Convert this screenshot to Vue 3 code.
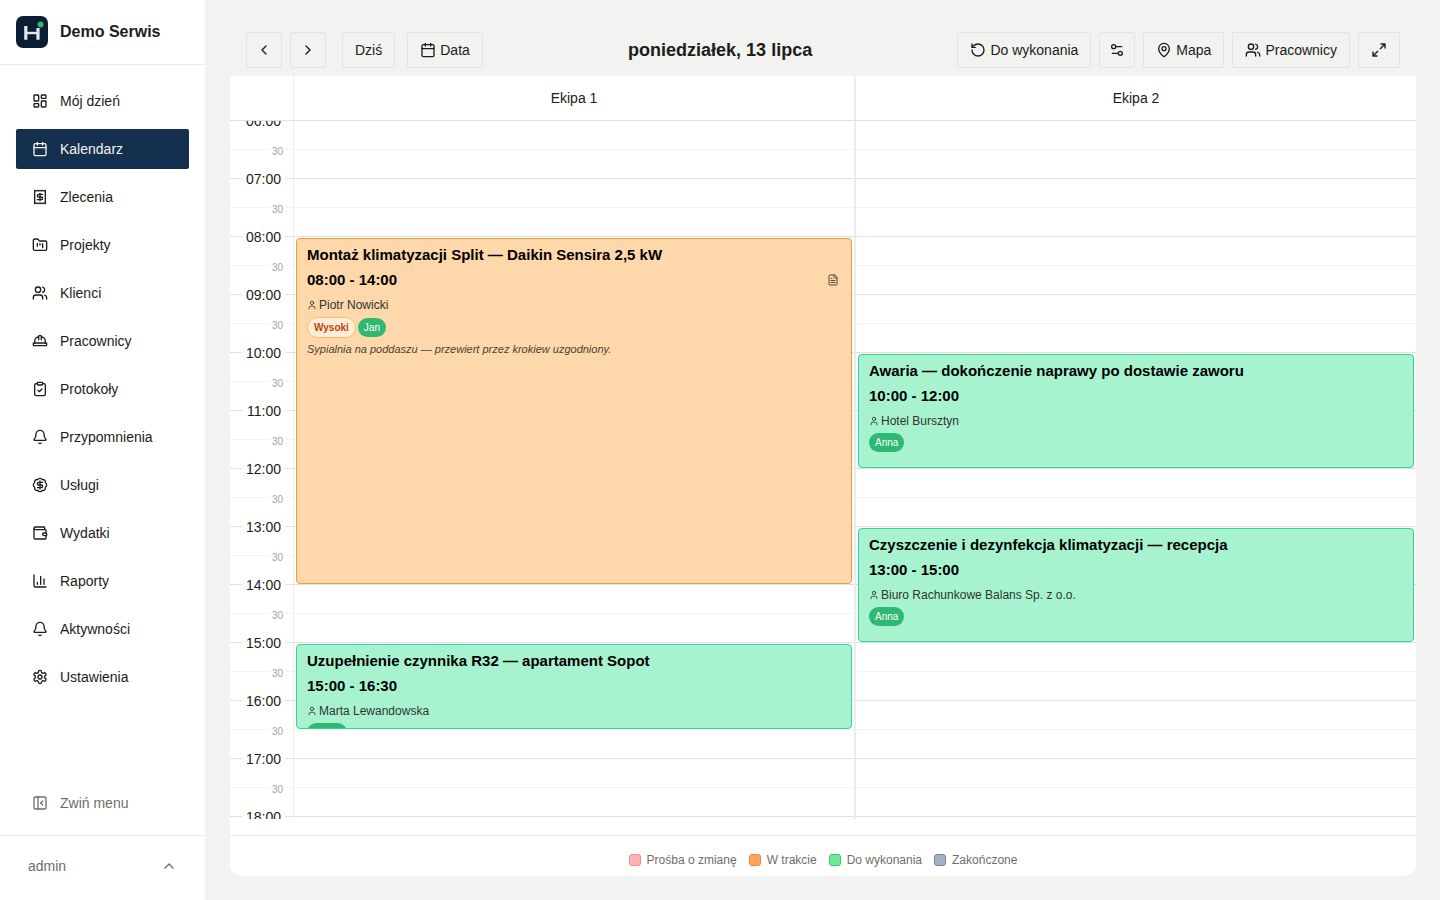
<script setup>
import { h } from 'vue'

const shapes = {
  dashboard: '<rect width="7" height="9" x="3" y="3" rx="1"/><rect width="7" height="5" x="14" y="3" rx="1"/><rect width="7" height="9" x="14" y="12" rx="1"/><rect width="7" height="5" x="3" y="16" rx="1"/>',
  calendar: '<path d="M8 2v4M16 2v4M3 10h18"/><rect width="18" height="18" x="3" y="4" rx="2"/>',
  receipt: '<path d="M4 2v20l2-1 2 1 2-1 2 1 2-1 2 1 2-1 2 1V2l-2 1-2-1-2 1-2-1-2 1-2-1-2 1Z"/><path d="M16 8h-6a2 2 0 1 0 0 4h4a2 2 0 1 1 0 4H8M12 17.5v-11"/>',
  folder: '<path d="M4 20h16a2 2 0 0 0 2-2V8a2 2 0 0 0-2-2h-7.93a2 2 0 0 1-1.66-.9l-.82-1.2A2 2 0 0 0 7.93 3H4a2 2 0 0 0-2 2v13c0 1.1.9 2 2 2Z"/><path d="M8 10v4M12 10v2M16 10v6"/>',
  users: '<path d="M16 21v-2a4 4 0 0 0-4-4H6a4 4 0 0 0-4 4v2"/><circle cx="9" cy="7" r="4"/><path d="M22 21v-2a4 4 0 0 0-3-3.87M16 3.13a4 4 0 0 1 0 7.75"/>',
  helmet: '<path d="M10 10V5a1 1 0 0 1 1-1h2a1 1 0 0 1 1 1v5M14 6a6 6 0 0 1 6 6v3M4 15v-3a6 6 0 0 1 6-6"/><rect x="2" y="15" width="20" height="4" rx="1"/>',
  clipboard: '<rect width="8" height="4" x="8" y="2" rx="1"/><path d="M16 4h2a2 2 0 0 1 2 2v14a2 2 0 0 1-2 2H6a2 2 0 0 1-2-2V6a2 2 0 0 1 2-2h2M9 14l2 2 4-4"/>',
  bell: '<path d="M10.268 21a2 2 0 0 0 3.464 0M3.262 15.326A1 1 0 0 0 4 17h16a1 1 0 0 0 .74-1.673C19.41 13.956 18 12.499 18 8A6 6 0 0 0 6 8c0 4.499-1.411 5.956-2.738 7.326"/>',
  badge: '<path d="M3.85 8.62a4 4 0 0 1 4.78-4.77 4 4 0 0 1 6.74 0 4 4 0 0 1 4.78 4.78 4 4 0 0 1 0 6.74 4 4 0 0 1-4.77 4.78 4 4 0 0 1-6.75 0 4 4 0 0 1-4.78-4.77 4 4 0 0 1 0-6.76Z"/><path d="M16 8h-6a2 2 0 1 0 0 4h4a2 2 0 1 1 0 4H8M12 18V6"/>',
  wallet: '<path d="M19 7V4a1 1 0 0 0-1-1H5a2 2 0 0 0 0 4h15a1 1 0 0 1 1 1v4h-3a2 2 0 0 0 0 4h3a1 1 0 0 0 1-1v-2a1 1 0 0 0-1-1"/><path d="M3 5v14a2 2 0 0 0 2 2h15a1 1 0 0 0 1-1v-4"/>',
  chart: '<path d="M3 3v16a2 2 0 0 0 2 2h16M18 17V9M13 17V5M8 17v-3"/>',
  gear: '<path d="M12.22 2h-.44a2 2 0 0 0-2 2v.18a2 2 0 0 1-1 1.73l-.43.25a2 2 0 0 1-2 0l-.15-.08a2 2 0 0 0-2.73.73l-.22.38a2 2 0 0 0 .73 2.73l.15.1a2 2 0 0 1 1 1.72v.51a2 2 0 0 1-1 1.74l-.15.09a2 2 0 0 0-.73 2.73l.22.38a2 2 0 0 0 2.73.73l.15-.08a2 2 0 0 1 2 0l.43.25a2 2 0 0 1 1 1.73V20a2 2 0 0 0 2 2h.44a2 2 0 0 0 2-2v-.18a2 2 0 0 1 1-1.73l.43-.25a2 2 0 0 1 2 0l.15.08a2 2 0 0 0 2.73-.73l.22-.39a2 2 0 0 0-.73-2.73l-.15-.08a2 2 0 0 1-1-1.74v-.5a2 2 0 0 1 1-1.74l.15-.09a2 2 0 0 0 .73-2.73l-.22-.38a2 2 0 0 0-2.73-.73l-.15.08a2 2 0 0 1-2 0l-.43-.25a2 2 0 0 1-1-1.73V4a2 2 0 0 0-2-2z"/><circle cx="12" cy="12" r="3"/>',
  panel: '<rect width="18" height="18" x="3" y="3" rx="2"/><path d="M9 3v18M16 15l-3-3 3-3"/>',
  up: '<path d="m18 15-6-6-6 6"/>',
  left: '<path d="m15 18-6-6 6-6"/>',
  right: '<path d="m9 18 6-6-6-6"/>',
  undo: '<path d="M3 12a9 9 0 1 0 9-9 9.75 9.75 0 0 0-6.74 2.74L3 8"/><path d="M3 3v5h5"/>',
  sliders: '<path d="M14 17H5M19 7h-9"/><circle cx="17" cy="17" r="3"/><circle cx="7" cy="7" r="3"/>',
  pin: '<path d="M20 10c0 4.993-5.539 10.193-7.399 11.799a1 1 0 0 1-1.202 0C9.539 20.193 4 14.993 4 10a8 8 0 0 1 16 0"/><circle cx="12" cy="10" r="3"/>',
  expand: '<path d="M15 3h6v6M21 3l-7 7M3 21l7-7M9 21H3v-6"/>',
  user: '<path d="M19 21v-2a4 4 0 0 0-4-4H9a4 4 0 0 0-4 4v2"/><circle cx="12" cy="7" r="4"/>',
  file: '<path d="M15 2H6a2 2 0 0 0-2 2v16a2 2 0 0 0 2 2h12a2 2 0 0 0 2-2V7Z"/><path d="M14 2v4a2 2 0 0 0 2 2h4M10 9H8M16 13H8M16 17H8"/>'
}

const Icon = (props) =>
  h('svg', {
    viewBox: '0 0 24 24',
    width: props.size || 16,
    height: props.size || 16,
    fill: 'none',
    stroke: 'currentColor',
    'stroke-width': 2,
    'stroke-linecap': 'round',
    'stroke-linejoin': 'round',
    'aria-hidden': 'true',
    innerHTML: shapes[props.name]
  })
Icon.props = ['name', 'size']

const nav = [
  ['dashboard', 'Mój dzień'],
  ['calendar', 'Kalendarz'],
  ['receipt', 'Zlecenia'],
  ['folder', 'Projekty'],
  ['users', 'Klienci'],
  ['helmet', 'Pracownicy'],
  ['clipboard', 'Protokoły'],
  ['bell', 'Przypomnienia'],
  ['badge', 'Usługi'],
  ['wallet', 'Wydatki'],
  ['chart', 'Raporty'],
  ['bell', 'Aktywności'],
  ['gear', 'Ustawienia']
]

const HOUR = 58
const FIRST = 6
const LAST = 20
const hours = Array.from({ length: LAST - FIRST }, (_, i) => FIRST + i)

const teams = [
  {
    name: 'Ekipa 1',
    jobs: [
      {
        title: 'Montaż klimatyzacji Split — Daikin Sensira 2,5 kW',
        from: 8, to: 14, time: '08:00 - 14:00', client: 'Piotr Nowicki',
        status: 'progress', priority: 'Wysoki', worker: 'Jan', file: true,
        note: 'Sypialnia na poddaszu — przewiert przez krokiew uzgodniony.'
      },
      {
        title: 'Uzupełnienie czynnika R32 — apartament Sopot',
        from: 15, to: 16.5, time: '15:00 - 16:30', client: 'Marta Lewandowska',
        status: 'todo', worker: 'Marek'
      }
    ]
  },
  {
    name: 'Ekipa 2',
    jobs: [
      {
        title: 'Awaria — dokończenie naprawy po dostawie zaworu',
        from: 10, to: 12, time: '10:00 - 12:00', client: 'Hotel Bursztyn',
        status: 'todo', worker: 'Anna'
      },
      {
        title: 'Czyszczenie i dezynfekcja klimatyzacji — recepcja',
        from: 13, to: 15, time: '13:00 - 15:00', client: 'Biuro Rachunkowe Balans Sp. z o.o.',
        status: 'todo', worker: 'Anna'
      }
    ]
  }
]

const legend = [
  ['request', 'Prośba o zmianę'],
  ['active', 'W trakcie'],
  ['open', 'Do wykonania'],
  ['done', 'Zakończone']
]

const place = (job) => ({
  top: `${(job.from - FIRST) * HOUR + 1}px`,
  height: `${(job.to - job.from) * HOUR - 2}px`
})
const label = (hour) => `${String(hour).padStart(2, '0')}:00`
</script>

<template>
  <div class="app">
    <aside class="sidebar">
      <div class="brand">
        <svg class="logo" viewBox="0 0 32 32" aria-hidden="true">
          <rect width="32" height="32" rx="7" fill="#0a1d33" />
          <path d="M9.800 10v13.700M22 12v11.700" stroke="#e4e8ec" stroke-width="3.200" />
          <path d="M10 17h12" stroke="#e4e8ec" stroke-width="2.400" />
          <circle cx="24.500" cy="8.500" r="3" fill="#2eb872" />
        </svg>
        <span>Demo Serwis</span>
      </div>
      <nav class="nav">
        <a v-for="[icon, text] in nav" :key="text" href="#" class="link" :class="{ active: text === 'Kalendarz' }">
          <Icon :name="icon" />{{ text }}
        </a>
      </nav>
      <div class="collapse">
        <button type="button" class="link muted"><Icon name="panel" />Zwiń menu</button>
      </div>
      <div class="account">
        <button type="button" class="user">admin<Icon name="up" /></button>
      </div>
    </aside>

    <main class="main">
      <header class="toolbar">
        <div class="group">
          <div class="arrows">
            <button type="button" class="btn square" aria-label="Poprzedni dzień"><Icon name="left" /></button>
            <button type="button" class="btn square" aria-label="Następny dzień"><Icon name="right" /></button>
          </div>
          <div class="dates">
            <button type="button" class="btn">Dziś</button>
            <button type="button" class="btn"><Icon name="calendar" />Data</button>
          </div>
        </div>
        <h1>poniedziałek, 13 lipca</h1>
        <div class="arrows">
          <button type="button" class="btn"><Icon name="undo" />Do wykonania</button>
          <button type="button" class="btn square" aria-label="Filtry"><Icon name="sliders" /></button>
          <button type="button" class="btn"><Icon name="pin" />Mapa</button>
          <button type="button" class="btn"><Icon name="users" />Pracownicy</button>
          <button type="button" class="btn" aria-label="Pełny ekran"><Icon name="expand" /></button>
        </div>
      </header>

      <section class="card">
        <div class="head">
          <div class="corner"></div>
          <div v-for="team in teams" :key="team.name" class="team">{{ team.name }}</div>
        </div>
        <div class="body">
          <div class="times">
            <template v-for="hour in hours" :key="hour">
              <div class="slot"><span class="hour">{{ label(hour) }}</span></div>
              <div class="slot full"><span class="half">30</span></div>
            </template>
          </div>
          <div v-for="team in teams" :key="team.name" class="column">
            <template v-for="hour in hours" :key="hour">
              <div class="slot"></div>
              <div class="slot full"></div>
            </template>
            <article v-for="job in team.jobs" :key="job.title" class="job" :class="job.status" :style="place(job)">
              <h2>{{ job.title }}</h2>
              <div class="when">{{ job.time }}<Icon v-if="job.file" name="file" size="12" /></div>
              <div class="client"><Icon name="user" size="10" />{{ job.client }}</div>
              <div class="tags">
                <span v-if="job.priority" class="tag priority">{{ job.priority }}</span>
                <span class="tag">{{ job.worker }}</span>
              </div>
              <p v-if="job.note">{{ job.note }}</p>
            </article>
          </div>
        </div>
        <ul class="legend">
          <li v-for="[kind, text] in legend" :key="kind"><i class="swatch" :class="kind"></i>{{ text }}</li>
        </ul>
      </section>
    </main>
  </div>
</template>

<style>
body {
  background: #f2f2f0;
}
</style>

<style scoped>
* {
  box-sizing: border-box;
}
.app {
  display: flex;
  height: 100vh;
  font: 14px/20px "Liberation Sans", Arial, sans-serif;
  color: #1c1c1a;
  background: #f2f2f0;
}
svg {
  flex: none;
  display: block;
}
button {
  font: inherit;
  color: inherit;
  background: none;
  border: 0;
  cursor: pointer;
}
.sidebar {
  flex: none;
  width: 205px;
  display: flex;
  flex-direction: column;
  background: #fff;
}
.brand {
  display: flex;
  align-items: center;
  gap: 12px;
  padding: 16px;
  border-bottom: 1px solid #ececea;
  font-size: 16px;
  font-weight: 700;
}
.logo {
  width: 32px;
  height: 32px;
}
.nav {
  flex: 1;
  min-height: 0;
  overflow: hidden;
  display: flex;
  flex-direction: column;
  gap: 8px;
  padding: 16px;
}
.link {
  flex: none;
  display: flex;
  align-items: center;
  gap: 12px;
  width: 100%;
  height: 40px;
  padding: 0 16px;
  border-radius: 2px;
  color: inherit;
  text-decoration: none;
}
.link.active {
  background: #15304f;
  color: #f2f2f0;
}
.link.muted {
  color: #6e6e69;
}
.collapse {
  padding: 0 16px 12px;
}
.account {
  border-top: 1px solid #ececea;
  padding: 10px 16px 14px;
}
.user {
  display: flex;
  align-items: center;
  justify-content: space-between;
  width: 100%;
  height: 40px;
  padding: 0 12px;
  color: #6e6e69;
}
.main {
  flex: 1;
  min-width: 0;
  display: flex;
  flex-direction: column;
  padding: 24px 24px 24px 25px;
}
.toolbar {
  display: flex;
  align-items: center;
  justify-content: space-between;
  padding: 8px 16px;
}
.group {
  display: flex;
  gap: 16px;
}
.arrows {
  display: flex;
  gap: 8px;
}
.dates {
  display: flex;
  gap: 12px;
}
.btn {
  display: flex;
  align-items: center;
  justify-content: center;
  gap: 4px;
  height: 36px;
  padding: 0 12px;
  border: 1px solid #e3e3df;
  border-radius: 2px;
}
.btn.square {
  width: 36px;
  padding: 0;
}
h1 {
  margin: 0;
  font-size: 18px;
  line-height: 28px;
}
.card {
  flex: 1;
  min-height: 0;
  display: flex;
  flex-direction: column;
  background: #fff;
  border-radius: 0 0 12px 12px;
  overflow: hidden;
}
.head {
  flex: none;
  display: flex;
  height: 45px;
  border-bottom: 1px solid #e0e0dc;
}
.corner,
.times {
  flex: none;
  width: 64px;
  border-right: 1px solid #ececea;
}
.team,
.column {
  flex: 1;
  min-width: 0;
  border-right: 1px solid #ececea;
}
.team {
  display: flex;
  align-items: center;
  justify-content: center;
}
.team:last-child,
.column:last-child {
  border-right: 0;
  border-left: 1px solid #ececea;
}
.body {
  flex: 1;
  min-height: 0;
  display: flex;
  align-items: flex-start;
  margin-bottom: 16px;
  overflow-y: auto;
  scrollbar-width: none;
}
.column {
  position: relative;
}
.slot {
  position: relative;
  height: 29px;
  border-bottom: 1px solid #f4f4f2;
}
.slot.full {
  border-bottom-color: #e0e0dc;
}
.hour,
.half {
  position: absolute;
  z-index: 1;
  right: 8px;
  background: #fff;
}
.hour {
  top: -10px;
  padding: 0 4px;
}
.half {
  top: -6px;
  padding: 0 2px;
  font-size: 10px;
  line-height: 16px;
  color: #a3a39e;
}
.job {
  position: absolute;
  left: 2px;
  right: 2px;
  padding: 3px 10px;
  border: 1px solid;
  border-radius: 4px;
  overflow: hidden;
}
.job.progress {
  background: #fed7aa;
  border-color: #f6963f;
}
.job.todo {
  background: #a7f3d0;
  border-color: #34d399;
}
h2,
.when {
  margin: 0;
  font-size: 15px;
  font-weight: 700;
  line-height: 25px;
  color: #000;
}
h2 {
  white-space: nowrap;
}
.when {
  display: flex;
  align-items: center;
  justify-content: space-between;
  padding-right: 2px;
}
.when svg {
  color: #5a4632;
}
.client {
  display: flex;
  align-items: center;
  gap: 2px;
  margin-top: 1px;
  font-size: 12px;
  line-height: 24px;
  color: #2f3430;
}
.tags {
  display: flex;
  align-items: center;
  gap: 2px;
}
.tag {
  padding: 2px 6px;
  border-radius: 10px;
  font-size: 10px;
  line-height: 15px;
  color: #fff;
  background: #2eb872;
}
.tag.priority {
  border: 1px solid #fdba74;
  border-radius: 11px;
  font-weight: 700;
  color: #c2410c;
  background: #ffedd5;
}
.job p {
  margin: 3px 0 0;
  font-size: 11px;
  font-style: italic;
  line-height: 16px;
  color: #4a4238;
}
.legend {
  flex: none;
  display: flex;
  align-items: center;
  justify-content: center;
  gap: 12px;
  margin: 0;
  padding: 16px 16px 8px;
  border-top: 1px solid #ececea;
  list-style: none;
  font-size: 12px;
  line-height: 16px;
  color: #6e6e69;
}
.legend li {
  display: flex;
  align-items: center;
  gap: 6px;
}
.swatch {
  width: 12px;
  height: 12px;
  border: 1px solid;
  border-radius: 3px;
}
.swatch.request {
  background: #fdb4b4;
  border-color: #f88888;
}
.swatch.active {
  background: #fca55f;
  border-color: #f58534;
}
.swatch.open {
  background: #6ee798;
  border-color: #37c871;
}
.swatch.done {
  background: #a6b1c6;
  border-color: #76839c;
}
</style>
